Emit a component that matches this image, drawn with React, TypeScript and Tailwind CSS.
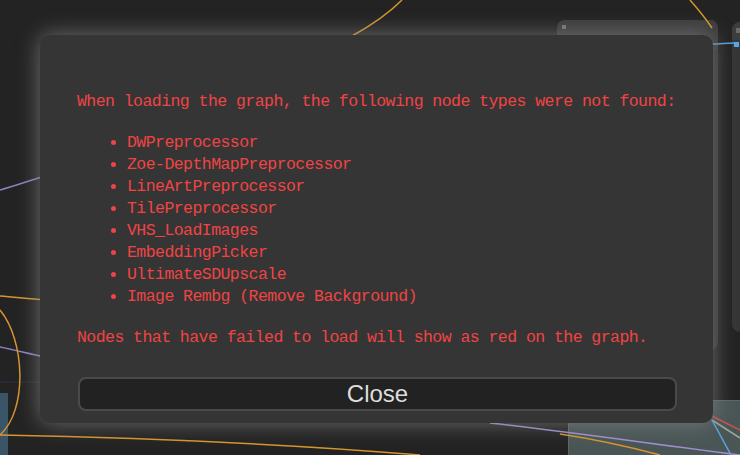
const missing = [
  'DWPreprocessor',
  'Zoe-DepthMapPreprocessor',
  'LineArtPreprocessor',
  'TilePreprocessor',
  'VHS_LoadImages',
  'EmbeddingPicker',
  'UltimateSDUpscale',
  'Image Rembg (Remove Background)',
];

function GraphBackground() {
  return (
    <>
      {/* nodes sitting on the canvas */}
      <div className="absolute left-[557px] top-[20px] w-[161px] h-[330px] rounded-[8px] bg-[#353535] overflow-hidden">
        <div className="h-[30px] bg-[#3c3c3c] flex items-start pl-[5px] pt-[5px]">
          <div className="w-[4px] h-[4px] bg-[#777]" />
        </div>
      </div>
      <div className="absolute left-[732px] top-[22px] w-[60px] h-[310px] rounded-[8px] bg-[#363636] overflow-hidden">
        <div className="h-[18px] bg-[#3d3d3d] flex items-start pl-[4px] pt-[6px]">
          <div className="w-[5px] h-[5px] bg-[#6a6a6a]" />
        </div>
        <div className="ml-[2px] mt-[2px] w-[5px] h-[5px] bg-[#5aa6e8]" />
      </div>
      <div className="absolute left-[568px] top-[400px] w-[200px] h-[80px] bg-[#4a5555] border-t border-l border-[#5c6868]" />
      <div className="absolute left-[-20px] top-[393px] w-[28px] h-[80px] bg-[#3a5468]" />

      <svg className="absolute inset-0" width="740" height="455" viewBox="0 0 740 455" fill="none">
        <path d="M0 382 L45 382" stroke="#2c3540" strokeWidth="1" />
        <path d="M0 190 C15 186 28 181 45 176" stroke="#8c80c0" strokeWidth="1.5" />
        <path d="M0 347 C15 350 30 354 45 357" stroke="#8c80c0" strokeWidth="1.5" />
        <path d="M0 296 C15 297 28 299 45 300" stroke="#d6962e" strokeWidth="1.5" />
        <path d="M0 310 C25 340 28 410 0 435" stroke="#d6962e" strokeWidth="1.5" />
        <path d="M0 435 C150 438 300 445 420 455" stroke="#d6962e" strokeWidth="1.5" />
        <path d="M560 434 C600 440 630 447 660 455" stroke="#d6962e" strokeWidth="1.5" />
        <path d="M402 0 C390 12 372 25 352 36" stroke="#d6962e" strokeWidth="1.5" />
        <path d="M690 0 C697 8 704 16 712 28" stroke="#d6962e" strokeWidth="1.5" />
        <path d="M490 423 C570 432 660 445 740 455" stroke="#a090d0" strokeWidth="1.5" />
        <path d="M712 44 C720 44 726 43 734 43" stroke="#5a9fd8" strokeWidth="1.5" />
        <path d="M712 416 L740 430" stroke="#d05050" strokeWidth="1.5" />
        <path d="M712 420 L740 438" stroke="#9aa89a" strokeWidth="1.5" />
        <path d="M712 420 L731 455" stroke="#5aa6e8" strokeWidth="1.5" />
      </svg>
    </>
  );
}

export default function App() {
  return (
    <div className="relative w-[740px] h-[455px] overflow-hidden bg-[#232323]">
      <GraphBackground />

      {/* Missing nodes dialog, laid over the graph */}
      <div className="absolute inset-0 pl-[40px] pt-[35px]">
        <div className="w-[673px] h-[388px] rounded-[10px] bg-[#353535] shadow-[0_0_22px_#888888c0] pl-[37px] pr-[36px] pt-[56px] flex flex-col">
          <div className="text-[#f04444] text-[16.5px] leading-[22px] tracking-[-0.55px] font-['Liberation_Mono',monospace] whitespace-nowrap">
            <p>When loading the graph, the following node types were not found:</p>
            <ul className="list-disc pl-[50px] mt-[19px]">
              {missing.map((name) => (
                <li key={name}>{name}</li>
              ))}
            </ul>
            <p className="mt-[19px]">Nodes that have failed to load will show as red on the graph.</p>
          </div>
          <button className="mt-[28px] ml-[1px] h-[34px] w-[599px] rounded-[8px] bg-[#222] border-2 border-[#4a4a4a] text-[#dddddd] text-[24px] leading-none font-['Liberation_Sans',Arial,sans-serif]">
            Close
          </button>
        </div>
      </div>
    </div>
  );
}
